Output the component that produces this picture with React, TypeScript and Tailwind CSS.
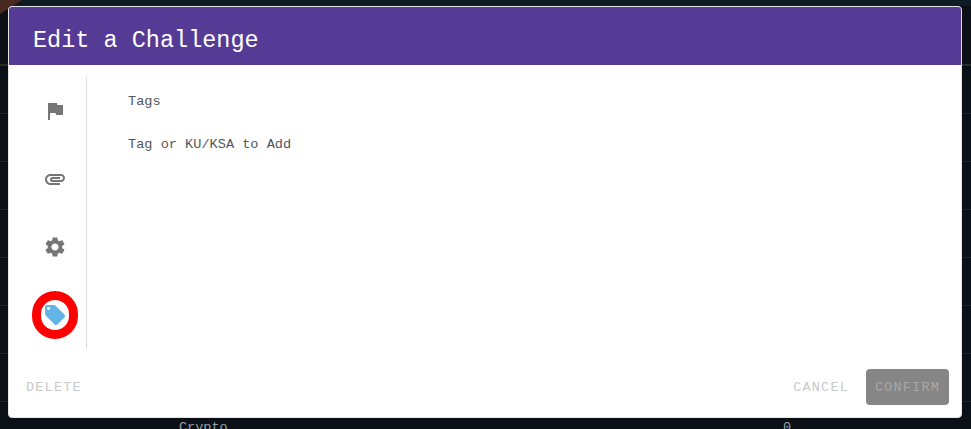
import { MdAttachment, MdFlag, MdLocalOffer, MdSettings } from 'react-icons/md';
import React from 'react';

const mono = "font-['Liberation_Mono','DejaVu_Sans_Mono',monospace]";

const App: React.FC = () => {
  return (
    <div className={`relative h-[429px] w-[971px] overflow-hidden bg-[#0b1016] ${mono}`}>
      {/* table behind the dialog */}
      <div className="h-[6px] bg-[#0f1b24]" />
      <div className="h-[60px] border-b-2 border-[#262a2e]" />
      {Array.from({ length: 7 }).map((_, i) => (
        <div key={i} className="h-[48px] border-b border-[#1e2328]" />
      ))}
      <div className="absolute left-0 top-0 h-[14px] w-[22px] bg-[#4a2a20] [clip-path:polygon(0_0,100%_0,0_100%)]" />
      <div className="absolute left-[179px] top-[420px] text-[13.5px] leading-4 text-[#9aa0a6]">Crypto</div>
      <div className="absolute left-[783px] top-[420px] text-[13.5px] leading-4 text-[#9aa0a6]">0</div>

      {/* dialog */}
      <div className="absolute left-[8px] top-[6px] flex h-[412px] w-[954px] flex-col overflow-hidden rounded border border-[#e5e5e5] bg-white">
        <div className="flex h-[58px] items-center bg-[#563b96] pl-6 pt-[10px]">
          <h2 className="text-[23.5px] leading-8 text-white">Edit a Challenge</h2>
        </div>
        <div className="flex h-[284px] pt-3">
          <div className="flex w-[78px] flex-col items-center border-r border-[#dcdcdc] pl-[14px]">
            <div className="flex h-[68px] w-[46px] items-center justify-center">
              <MdFlag size={24} color="#757575" />
            </div>
            <div className="flex h-[68px] w-[46px] items-center justify-center">
              <MdAttachment size={24} color="#757575" />
            </div>
            <div className="flex h-[68px] w-[46px] items-center justify-center">
              <MdSettings size={24} color="#757575" />
            </div>
            <div className="mt-[10px] flex h-[48px] w-[46px] items-center justify-center rounded-full border-[9px] border-[#ff0000]">
              <MdLocalOffer size={24} color="#63b5e8" className="shrink-0" />
            </div>
          </div>
          <div className="pl-[41px] pt-[17px] text-[13.6px] leading-4 text-[#50585c]">
            <p>Tags</p>
            <p className="mt-[27px]">Tag or KU/KSA to Add</p>
          </div>
        </div>
        <div className="flex flex-1 items-end justify-between pb-[12px] pl-[17px] pr-[12px]">
          <span className="flex h-[36px] items-center pt-[2px] text-[13.5px] tracking-[1.2px] text-[#c9c9c9]">DELETE</span>
          <div className="flex items-center gap-[17px]">
            <span className="pt-[2px] text-[13.5px] tracking-[1.2px] text-[#c9c9c9]">CANCEL</span>
            <button className="flex h-[36px] w-[83px] items-center justify-center rounded bg-[#868686] pt-[2px] text-[13.5px] tracking-[1.2px] text-[#a8a8a8]">
              CONFIRM
            </button>
          </div>
        </div>
      </div>
    </div>
  );
};

export default App;
